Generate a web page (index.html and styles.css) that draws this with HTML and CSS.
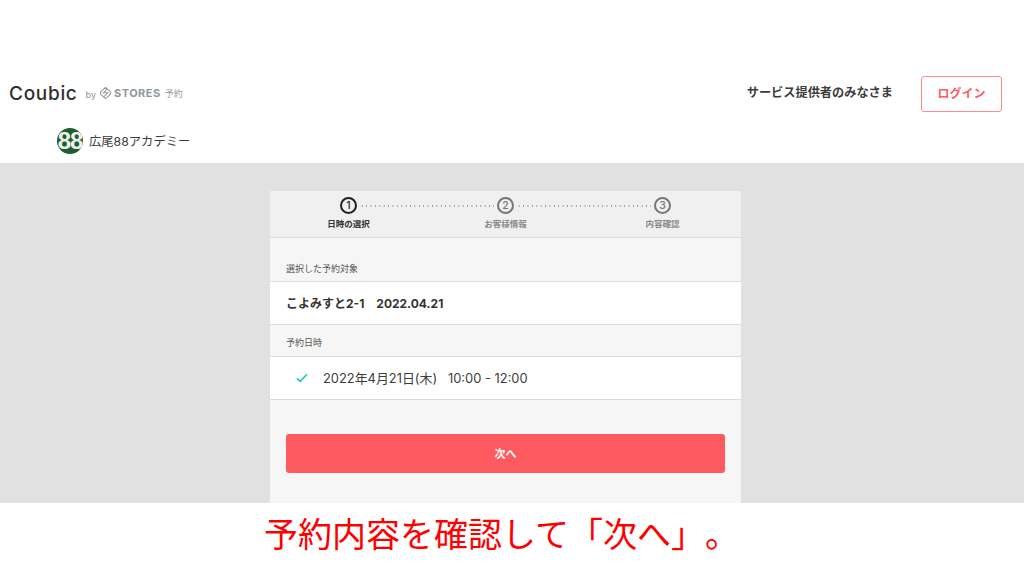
FILE: index.html
```html
<!DOCTYPE html>
<html lang="ja">
<head>
<meta charset="utf-8">
<title>予約内容の確認</title>
<link rel="stylesheet" href="styles.css">
</head>
<body>
<div class="page">
  <header class="header">
    <div class="brand-row">
      <div class="brand">
        <span class="coubic">Coubic</span>
        <span class="by">by</span>
        <svg class="stores-icon" viewBox="0 0 12 14" width="11" height="14"><path d="M6 .8 10.4 4.6a3.2 3.2 0 0 1 0 4.8L6 13.2 1.6 9.4a3.2 3.2 0 0 1 0-4.8Z" fill="none" stroke="#8f979e" stroke-width="1.1"/><path d="M7.8 2.8 3.6 6.8h4.8L4.2 11.2" fill="none" stroke="#8f979e" stroke-width="1.1"/></svg>
        <span class="stores">STORES</span>
        <span class="stores-sub">予約</span>
      </div>
      <nav class="nav">
        <span class="nav-link">サービス提供者のみなさま</span>
        <a class="login">ログイン</a>
      </nav>
    </div>
    <div class="shop-row">
      <span class="avatar">88</span>
      <span class="shop-name">広尾88アカデミー</span>
    </div>
  </header>
  <main class="main">
    <section class="card">
      <div class="steps">
        <div class="step-track">
          <span class="num current">1</span>
          <span class="dots"></span>
          <span class="num">2</span>
          <span class="dots"></span>
          <span class="num">3</span>
        </div>
        <div class="step-labels">
          <span class="current-label">日時の選択</span>
          <span>お客様情報</span>
          <span>内容確認</span>
        </div>
      </div>
      <div class="label first">選択した予約対象</div>
      <div class="row target"><span class="row-text">こよみすと2-1　2022.04.21</span></div>
      <div class="label">予約日時</div>
      <div class="row slot">
        <svg class="check" viewBox="0 0 12 10" width="12" height="10"><path d="M1 5.4 4.2 8.4 11 1.2" fill="none" stroke="#19c9ba" stroke-width="1.6"/></svg>
        <span class="row-text">2022年4月21日(木)&nbsp;&nbsp; 10:00 - 12:00</span>
      </div>
      <div class="actions"><button class="next"><span class="next-text">次へ</span></button></div>
    </section>
  </main>
  <footer class="caption">予約内容を確認して「次へ」。</footer>
</div>
</body>
</html>
```
FILE: styles.css
```css
* { box-sizing: border-box; }
html, body { margin: 0; padding: 0; }
body {
  background: #fff;
  color: #333;
  font-family: "Inter", "Noto Sans CJK JP", sans-serif;
}
.page { width: 1024px; height: 573px; overflow: hidden; display: flex; flex-direction: column; }
.header { height: 163px; padding: 70px 22px 0 9px; background: #fff; }
.brand-row { height: 44px; display: flex; align-items: center; justify-content: space-between; }
.brand { display: flex; align-items: center; margin-top: 2px; }
.coubic { font-size: 19px; font-weight: 500; color: #2f2f2f; letter-spacing: .7px; }
.by { font-size: 9px; color: #8f979e; margin: 2px 4px 0 8px; }
.stores { font-size: 11px; font-weight: 700; color: #8f979e; letter-spacing: .5px; margin-left: 3px; }
.stores-sub { font-size: 9px; color: #8f979e; margin-left: 4px; }
.nav { display: flex; align-items: center; gap: 28px; margin-top: 3px; }
.nav-link { font-size: 12.2px; font-weight: 700; color: #3c3c3c; padding-bottom: 4px; }
.login { width: 81px; height: 36px; border: 1px solid #ff8a8f; border-radius: 3px; color: #ff5a5f; font-size: 12px; font-weight: 700; display: flex; align-items: center; justify-content: center; padding-bottom: 2px; }
.shop-row { display: flex; align-items: center; margin: 14px 0 0 48px; gap: 6px; }
.avatar { width: 26px; height: 26px; border-radius: 50%; background: #1e5c32; color: #eef3ea; font-family: "Liberation Sans", sans-serif; font-size: 24px; font-weight: 700; line-height: 26px; text-align: center; letter-spacing: -1px; overflow: hidden; }
.shop-name { font-size: 12.3px; color: #3c3c3c; }
.main { height: 340px; background: #e1e1e1; padding-top: 28px; overflow: hidden; }
.card { width: 471px; height: 312px; margin: 0 auto 0 270px; background: #f6f6f6; }
.steps { height: 47px; background: #f0f0f0; border-bottom: 1px solid #dcdcdc; padding-top: 6px; }
.step-track { display: flex; align-items: center; padding: 0 70px; }
.num { flex: none; width: 17px; height: 17px; border: 2px solid #777; border-radius: 50%; font-size: 10.5px; font-weight: 500; line-height: 13px; text-align: center; color: #777; }
.num.current { border-color: #222; color: #222; }
.dots { flex: 1; height: 2px; margin: 0 3px; background-image: radial-gradient(circle, #999 0.8px, transparent 1px); background-size: 4.4px 2px; }
.step-labels { display: grid; grid-template-columns: repeat(3, 1fr); text-align: center; font-size: 8.5px; font-weight: 700; color: #8a8a8a; margin-top: 4px; line-height: 13px; }
.current-label { color: #333; }
.label { height: 31px; padding: 11px 16px 0; font-size: 9px; line-height: 14px; color: #555; }
.label.first { height: 43px; padding-top: 24px; }
.row { background: #fff; border-top: 1px solid #dcdcdc; border-bottom: 1px solid #dcdcdc; display: flex; align-items: center; padding-left: 16px; height: 44px; font-size: 12px; color: #3c3c3c; }
.row-text { padding-bottom: 2px; }
.target { font-weight: 700; color: #333; }
.slot { padding-left: 26px; gap: 15px; font-size: 12.9px; }
.check { flex: none; }
.actions { padding: 34px 16px 0; }
.next { display: block; width: 100%; height: 39px; border: 0; border-radius: 3px; background: #ff5a5f; color: #fff; font-family: inherit; font-size: 11px; font-weight: 700; }
.next-text { display: block; padding-bottom: 2px; }
.caption { height: 70px; background: #fff; color: #f00; font-size: 34px; font-weight: 400; line-height: 60px; padding-left: 264px; white-space: nowrap; font-family: "Noto Sans CJK JP", sans-serif; text-spacing-trim: space-all; }
```
